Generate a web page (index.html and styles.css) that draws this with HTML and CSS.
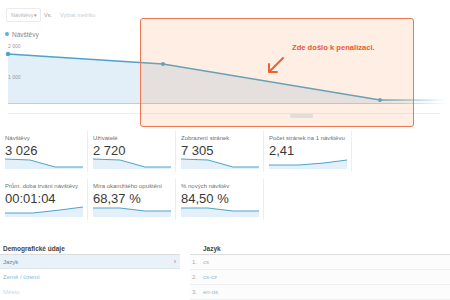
FILE: index.html
```html
<!DOCTYPE html>
<html lang="cs">
<head>
<meta charset="utf-8">
<link rel="stylesheet" href="styles.css">
</head>
<body>
<div class="overview">
  <div class="toolbar">
    <div class="select"><span>Návštěvy</span><span class="caret">▾</span></div>
    <span class="vs">Vs.</span>
    <span class="pick">Vybrat metriku</span>
  </div>
  <div class="legend"><span class="dot"></span><span>Návštěvy</span></div>
  <svg class="chart" width="450" height="88" viewBox="0 0 450 88">
    <defs>
      <linearGradient id="fillg" gradientUnits="userSpaceOnUse" x1="370" y1="0" x2="448" y2="0">
        <stop offset="0" stop-color="#e2eff9"/>
        <stop offset="1" stop-color="#e2eff9" stop-opacity="0"/>
      </linearGradient>
      <linearGradient id="lineg" gradientUnits="userSpaceOnUse" x1="380" y1="0" x2="445" y2="0">
        <stop offset="0" stop-color="#4ea3c8"/>
        <stop offset="1" stop-color="#4ea3c8" stop-opacity="0"/>
      </linearGradient>
      <linearGradient id="baseg" gradientUnits="userSpaceOnUse" x1="400" y1="0" x2="448" y2="0">
        <stop offset="0" stop-color="#c9c9c9"/>
        <stop offset="1" stop-color="#c9c9c9" stop-opacity="0"/>
      </linearGradient>
    </defs>
    <path d="M8,14 L163,24 L380,60 L448,60 L448,63 L8,63 Z" fill="url(#fillg)"/>
    <text x="8" y="8" class="axis">2 000</text>
    <text x="8" y="39" class="axis">1 000</text>
    <line x1="8" y1="63.5" x2="448" y2="63.5" stroke="url(#baseg)" stroke-width="1"/>
    <line x1="8" y1="73.5" x2="440" y2="73.5" stroke="#eeeeee" stroke-width="1"/>
    <polyline points="8,14 163,24 380,60" fill="none" stroke="#4ea3c8" stroke-width="1.6"/>
    <line x1="380" y1="60" x2="445" y2="60" stroke="url(#lineg)" stroke-width="1.6"/>
    <circle cx="8" cy="14" r="2.2" fill="#4ea3c8"/>
    <circle cx="163" cy="24" r="2" fill="#4ea3c8"/>
    <circle cx="380" cy="60" r="2" fill="#4ea3c8"/>
  </svg>
  <div class="note">
    <p class="note-text">Zde došlo k penalizaci.</p>
    <svg class="arrow" width="20" height="20" viewBox="0 0 20 20">
      <path d="M16,2 L2,16 M2,16 L10,16 M2,16 L2,8" fill="none" stroke="#f0602e" stroke-width="2" stroke-linecap="round"/>
    </svg>
    <span class="handle"></span>
  </div>
</div>

<div class="metrics">
  <div class="tile">
    <div class="label">Návštěvy</div>
    <div class="value">3 026</div>
    <svg class="spark" width="80" height="11" viewBox="0 0 80 11"><path d="M0,1 L25,2 L50,9 L78,9 L78,11 L0,11 Z" fill="#e4f0f9"/><polyline points="0,1 25,2 50,9 78,9" fill="none" stroke="#4ea3c8" stroke-width="1"/></svg>
  </div>
  <div class="tile">
    <div class="label">Uživatelé</div>
    <div class="value">2 720</div>
    <svg class="spark" width="80" height="11" viewBox="0 0 80 11"><path d="M0,1 L27,2 L52,9 L78,9 L78,11 L0,11 Z" fill="#e4f0f9"/><polyline points="0,1 27,2 52,9 78,9" fill="none" stroke="#4ea3c8" stroke-width="1"/></svg>
  </div>
  <div class="tile">
    <div class="label">Zobrazení stránek</div>
    <div class="value">7 305</div>
    <svg class="spark" width="80" height="11" viewBox="0 0 80 11"><path d="M0,1 L27,2 L52,9 L78,9 L78,11 L0,11 Z" fill="#e4f0f9"/><polyline points="0,1 27,2 52,9 78,9" fill="none" stroke="#4ea3c8" stroke-width="1"/></svg>
  </div>
  <div class="tile">
    <div class="label">Počet stránek na 1 návštěvu</div>
    <div class="value">2,41</div>
    <svg class="spark" width="80" height="11" viewBox="0 0 80 11"><path d="M0,7 L30,7 L55,5 L78,2 L78,11 L0,11 Z" fill="#e4f0f9"/><polyline points="0,7 30,7 55,5 78,2" fill="none" stroke="#4ea3c8" stroke-width="1"/></svg>
  </div>
  <div class="tile">
    <div class="label">Prům. doba trvání návštěvy</div>
    <div class="value">00:01:04</div>
    <svg class="spark" width="80" height="11" viewBox="0 0 80 11"><path d="M0,7 L28,7 L55,4 L78,1 L78,11 L0,11 Z" fill="#e4f0f9"/><polyline points="0,7 28,7 55,4 78,1" fill="none" stroke="#4ea3c8" stroke-width="1"/></svg>
  </div>
  <div class="tile">
    <div class="label">Míra okamžitého opuštění</div>
    <div class="value">68,37 %</div>
    <svg class="spark" width="80" height="11" viewBox="0 0 80 11"><path d="M0,2 L27,2 L52,5 L78,5 L78,11 L0,11 Z" fill="#e4f0f9"/><polyline points="0,2 27,2 52,5 78,5" fill="none" stroke="#4ea3c8" stroke-width="1"/></svg>
  </div>
  <div class="tile">
    <div class="label">% nových návštěv</div>
    <div class="value">84,50 %</div>
    <svg class="spark" width="80" height="11" viewBox="0 0 80 11"><path d="M0,2 L27,2 L52,5 L78,5 L78,11 L0,11 Z" fill="#e4f0f9"/><polyline points="0,2 27,2 52,5 78,5" fill="none" stroke="#4ea3c8" stroke-width="1"/></svg>
  </div>
</div>

<div class="demo">
  <div class="dims">
    <div class="dims-head">Demografické údaje</div>
    <div class="dim active"><span>Jazyk</span><span class="chev">›</span></div>
    <div class="dim">Země / území</div>
    <div class="dim faint">Město</div>
  </div>
  <div class="table">
    <div class="table-head">Jazyk</div>
    <div class="row"><span class="num">1.</span><span class="val">cs</span></div>
    <div class="row"><span class="num">2.</span><span class="val">cs-cz</span></div>
    <div class="row"><span class="num">3.</span><span class="val">en-us</span></div>
  </div>
</div>
</body>
</html>
```

FILE: styles.css
```css
html, body {
  margin: 0;
  padding: 0;
  background: #ffffff;
  width: 450px;
  height: 300px;
  overflow: hidden;
  font-family: "Liberation Sans", Arial, sans-serif;
  color: #333;
}

.overview {
  position: relative;
  height: 131px;
}

.toolbar {
  display: flex;
  align-items: center;
  height: 14px;
  padding: 8px 0 0 6px;
  font-size: 5.5px;
  color: #b5b5b5;
}

.select {
  box-sizing: border-box;
  width: 35px;
  height: 14px;
  border: 1px solid #ececec;
  border-radius: 2px;
  display: flex;
  align-items: center;
  justify-content: space-between;
  padding: 0 3px 0 4px;
}

.caret {
  font-size: 5px;
  color: #999;
}

.vs {
  margin-left: 3px;
  color: #999;
}

.pick {
  margin-left: 8px;
  color: #c4cfd8;
}

.legend {
  display: flex;
  align-items: center;
  gap: 3px;
  height: 10px;
  margin-top: 7px;
  padding-left: 5px;
  font-size: 6.5px;
  color: #888;
}

.dot {
  width: 4px;
  height: 4px;
  border-radius: 50%;
  background: #5eb0d3;
}

.chart {
  display: block;
  margin-top: 1px;
}

.axis {
  font-size: 5px;
  fill: #999;
  font-family: "Liberation Sans", Arial, sans-serif;
}

.note {
  position: absolute;
  left: 140px;
  top: 18px;
  width: 274px;
  height: 109px;
  box-sizing: border-box;
  border: 1.5px solid #ec7652;
  border-radius: 3px;
  background: rgba(246, 150, 80, 0.16);
}

.note-text {
  margin: 0;
  padding: 24px 0 0 151px;
  font-size: 7.6px;
  line-height: 10px;
  font-weight: bold;
  color: #e85a3a;
}

.arrow {
  position: absolute;
  left: 126px;
  top: 37px;
}

.handle {
  position: absolute;
  left: 149px;
  top: 95px;
  width: 23px;
  height: 4px;
  background: #e3ddd6;
  border-radius: 1px;
}

.metrics {
  display: grid;
  grid-template-columns: repeat(4, 88px);
  row-gap: 7px;
  column-gap: 0;
}

.tile {
  box-sizing: border-box;
  height: 41px;
  padding: 3px 0 3px 5px;
  border-right: 1px solid #ededed;
}

.label {
  font-size: 6px;
  line-height: 8px;
  color: #707070;
  white-space: nowrap;
  overflow: hidden;
}

.value {
  margin-top: 2px;
  font-size: 13px;
  line-height: 14px;
  color: #3a3a3a;
  white-space: nowrap;
}

.spark {
  display: block;
}

.demo {
  display: flex;
  margin-top: 24px;
  gap: 10px;
}

.dims {
  width: 180px;
}

.dims-head, .table-head {
  font-size: 6.5px;
  font-weight: bold;
  line-height: 10px;
  color: #444;
  border-bottom: 1px solid #dcdcdc;
}

.dims-head {
  padding-left: 3px;
}

.dim {
  display: flex;
  justify-content: space-between;
  align-items: center;
  height: 15px;
  padding: 0 4px 0 3px;
  font-size: 6px;
  color: #86b9d9;
}

.dim.active {
  background: #e9f1f9;
  color: #5b87aa;
  border-bottom: 1px solid #dde6ee;
  height: 13px;
}

.dim.faint {
  color: #c3dae9;
}

.chev {
  font-size: 7px;
  color: #888;
}

.table {
  flex: 1;
}

.table-head {
  padding-left: 13px;
}

.row {
  display: flex;
  align-items: center;
  height: 14px;
  border-bottom: 1px solid #efefef;
  font-size: 6px;
  background: #fcfcfc;
}

.num {
  width: 11px;
  padding-left: 2px;
  color: #aaa;
}

.val {
  color: #8fbcd8;
}
```
